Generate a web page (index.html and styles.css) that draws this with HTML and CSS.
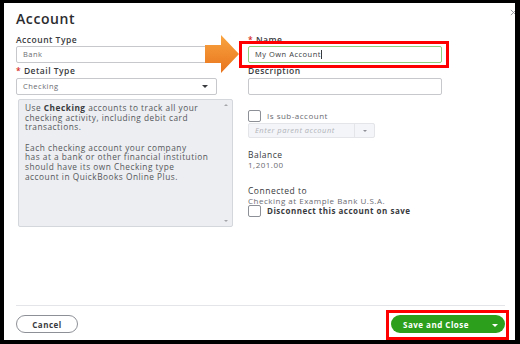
FILE: index.html
```html
<!DOCTYPE html>
<html lang="en">
<head>
  <meta charset="UTF-8" />
  <title>Account</title>
  <link rel="stylesheet" href="styles.css">
</head>
<body>
  <div class="dialog">
    <div class="head">
      <h1>Account</h1>
      <!-- close icon -->
      <svg class="close" viewBox="0 0 8 8">
        <path d="M1 1l6 6M7 1l-6 6" />
      </svg>
    </div>

    <div class="content">
      <div class="col left">
        <div class="lbl">Account Type</div>
        <div class="field">Bank</div>

        <div class="lbl gap"><span class="req">*</span> Detail Type</div>
        <div class="field select">Checking <span class="caret"></span></div>

        <div class="help">
          <p>Use <b>Checking</b> accounts to track all your<br>checking activity, including debit card<br>transactions.</p>
          <p>Each checking account your company<br>has at a bank or other financial institution<br>should have its own Checking type<br>account in QuickBooks Online Plus.</p>
          <span class="scroll up"></span>
          <span class="scroll down"></span>
        </div>
      </div>

      <div class="col right">
        <div class="lbl"><span class="req">*</span> Name</div>
        <div class="field active">My Own Account<span class="cursor"></span></div>

        <div class="lbl gap">Description</div>
        <div class="field"></div>

        <div class="check sub">
          <span class="box"></span> Is sub-account
        </div>
        <div class="parent">
          <span class="ph">Enter parent account</span>
          <span class="btn"><span class="caret light"></span></span>
        </div>

        <div class="lbl plain balance">Balance</div>
        <div class="val">1,201.00</div>

        <div class="lbl plain conn">Connected to</div>
        <div class="val">Checking at Example Bank U.S.A.</div>
        <div class="check bold">
          <span class="box"></span> Disconnect this account on save
        </div>
      </div>
    </div>

    <div class="foot">
      <button class="cancel">Cancel</button>
      <button class="save">Save and Close <span class="caret white"></span></button>
    </div>

    <!-- screenshot annotations -->
    <svg class="arrow" viewBox="0 0 34 38">
      <defs>
        <linearGradient id="orange" x1="0" y1="0" x2="0" y2="1">
          <stop offset="0" stop-color="#f9a540" />
          <stop offset="1" stop-color="#e8731c" />
        </linearGradient>
      </defs>
      <polygon points="0,10 16,10 16,0 34,19 16,38 16,28 0,28" fill="url(#orange)" />
    </svg>
    <div class="mark mark-name"></div>
    <div class="mark mark-save"></div>
  </div>
</body>
</html>
```

FILE: styles.css
```css
body {
  margin: 0;
  padding: 0;
  background: #000;
  font-family: "Open Sans", "Liberation Sans", sans-serif;
  color: #393a3d;
  letter-spacing: 0.5px;
}

.dialog {
  position: relative;
  background: #fff;
  width: 511px;
  height: 337px;
  margin: 3px 5px 4px 4px;
  display: flex;
  flex-direction: column;
  overflow: hidden;
}

.head {
  padding: 8px 0 0 12px;
  height: 17px;
}

h1 {
  margin: 0;
  font-size: 14px;
  line-height: 16px;
  font-weight: 600;
  letter-spacing: 0.6px;
  color: #2b2c2f;
}

.close {
  position: absolute;
  top: 6px;
  right: -2px;
  width: 7px;
  height: 7px;
  stroke: #8d9096;
  stroke-width: 1;
  fill: none;
}

.content {
  display: flex;
  gap: 15px;
  padding: 7px 0 0 12px;
}

.col {
  display: flex;
  flex-direction: column;
}

.left {
  width: 217px;
}

.right {
  width: 194px;
}

.lbl {
  font-size: 8.5px;
  line-height: 10px;
  font-weight: 600;
  margin-bottom: 1px;
  white-space: nowrap;
}

.lbl.gap {
  margin-top: 3px;
  margin-bottom: 2px;
}

.lbl.plain {
  font-weight: 500;
}

.req {
  color: #d52b1e;
}

.field {
  position: relative;
  box-sizing: border-box;
  width: 201px;
  height: 17px;
  border: 1px solid #c6c8cc;
  border-radius: 2px;
  padding: 0 6px;
  font-size: 7.5px;
  line-height: 15px;
  color: #6b6c72;
}

.right .field {
  width: 194px;
}

.field.active {
  border-color: #8fcf7e;
  color: #393a3d;
}

.cursor {
  display: inline-block;
  width: 1px;
  height: 9px;
  background: #393a3d;
  vertical-align: -2px;
}

.caret {
  display: inline-block;
  width: 0;
  height: 0;
  border-left: 3px solid transparent;
  border-right: 3px solid transparent;
  border-top: 3px solid #393a3d;
}

.select .caret {
  position: absolute;
  right: 8px;
  top: 6px;
}

.caret.light {
  border-top-color: #8d9096;
  border-left-width: 2.5px;
  border-right-width: 2.5px;
  border-top-width: 2.5px;
}

.caret.white {
  border-top-color: #fff;
  border-left-width: 3.5px;
  border-right-width: 3.5px;
  border-top-width: 3.5px;
  margin-left: 20px;
  vertical-align: 1px;
}

.help {
  position: relative;
  box-sizing: border-box;
  margin: 4px 0 0 2px;
  width: 215px;
  height: 128px;
  background: #eceef1;
  border: 1px solid #d4d7dc;
  border-radius: 2px;
  padding: 3px 10px 0 6px;
  font-size: 8.3px;
  line-height: 9.6px;
  color: #55565b;
  white-space: nowrap;
}

.help p {
  margin: 0 0 11px;
}

.help b {
  font-weight: 700;
  color: #393a3d;
}

.scroll {
  position: absolute;
  right: 4px;
  width: 0;
  height: 0;
  border-left: 2px solid transparent;
  border-right: 2px solid transparent;
}

.scroll.up {
  top: 4px;
  border-bottom: 2px solid #a3a6ab;
}

.scroll.down {
  bottom: 4px;
  border-top: 2px solid #a3a6ab;
}

.check {
  display: flex;
  align-items: center;
  gap: 6px;
  font-size: 8px;
  line-height: 13px;
  color: #6b6c72;
  white-space: nowrap;
}

.check.sub {
  margin-top: 14px;
}

.check.bold {
  font-weight: 700;
  color: #393a3d;
  margin-top: -2px;
}

.box {
  box-sizing: border-box;
  width: 13px;
  height: 12px;
  border: 1px solid #8d9096;
  border-radius: 2px;
  background: #fff;
}

.parent {
  display: flex;
  box-sizing: border-box;
  width: 127px;
  height: 15px;
  margin-top: 1px;
  background: #f4f5f8;
  border: 1px solid #e3e5e8;
  border-radius: 2px;
}

.ph {
  flex: 1;
  padding-left: 6px;
  font-size: 7.5px;
  line-height: 13px;
  font-style: italic;
  color: #b0b3b8;
  border-right: 1px solid #e3e5e8;
}

.parent .btn {
  width: 19px;
  display: flex;
  align-items: center;
  justify-content: center;
}

.balance {
  margin-top: 12px;
  margin-bottom: 0;
}

.conn {
  margin-top: 16px;
  margin-bottom: 0;
}

.val {
  font-size: 8px;
  line-height: 10px;
  color: #6b6c72;
  white-space: nowrap;
}

.foot {
  margin: auto 10px 0 12px;
  border-top: 1px solid #e3e5e8;
  padding: 9px 0 7px;
  display: flex;
  justify-content: space-between;
  align-items: center;
}

button {
  font-family: inherit;
  letter-spacing: 0.5px;
  cursor: pointer;
  height: 18px;
  border-radius: 9px;
  font-weight: 700;
  font-size: 8px;
  padding: 0;
}

.cancel {
  width: 62px;
  background: #fff;
  border: 1px solid #8d9096;
  color: #393a3d;
}

.save {
  width: 114px;
  background: #2ca01c;
  border: none;
  color: #fff;
  text-align: left;
  padding-left: 12px;
}

.arrow {
  position: absolute;
  left: 201px;
  top: 32px;
  width: 34px;
  height: 38px;
}

.mark {
  position: absolute;
  border: 3px solid #ff0000;
}

.mark-name {
  left: 235px;
  top: 38px;
  width: 204px;
  height: 21px;
}

.mark-save {
  left: 382px;
  top: 307px;
  width: 117px;
  height: 24px;
}
```
